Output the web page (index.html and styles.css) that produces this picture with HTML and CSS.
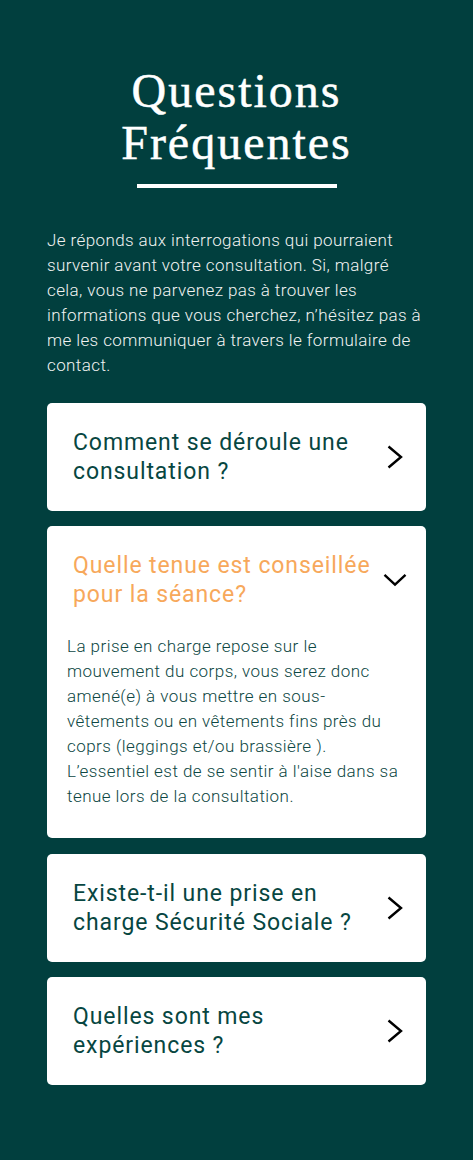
FILE: index.html
```html
<!DOCTYPE html>
<html lang="fr">
<head>
<meta charset="utf-8">
<title>Questions Fréquentes</title>
<link rel="stylesheet" href="styles.css">
</head>
<body>
<main class="page">
  <h1 class="title">Questions<br>Fréquentes</h1>
  <div class="title-bar"></div>
  <p class="intro">Je réponds aux interrogations qui pourraient survenir avant votre consultation. Si, malgré<br>cela, vous ne parvenez pas à trouver les informations que vous cherchez, n’hésitez pas à me les communiquer à travers le formulaire de contact.</p>

  <section class="faq">
    <div class="card">
      <div class="card-head">
        <h2 class="q">Comment se déroule une consultation ?</h2>
        <svg class="icon" viewBox="0 0 24 24"><path d="M5.5 1.5 L18 12 L5.5 22.5"/></svg>
      </div>
    </div>

    <div class="card open">
      <div class="card-head">
        <h2 class="q">Quelle tenue est conseillée pour la séance?</h2>
        <svg class="icon" viewBox="0 0 24 24"><path d="M1.5 6.8 L12 16.6 L22.5 6.8"/></svg>
      </div>
      <p class="answer">La prise en charge repose sur le mouvement du corps, vous serez donc amené(e) à vous mettre en sous-vêtements ou en vêtements fins près du coprs (leggings et/ou brassière ). L’essentiel est de se sentir à l'aise dans sa tenue lors de la consultation.</p>
    </div>

    <div class="card">
      <div class="card-head">
        <h2 class="q">Existe-t-il une prise en charge Sécurité Sociale ?</h2>
        <svg class="icon" viewBox="0 0 24 24"><path d="M5.5 1.5 L18 12 L5.5 22.5"/></svg>
      </div>
    </div>

    <div class="card">
      <div class="card-head">
        <h2 class="q">Quelles sont mes expériences ?</h2>
        <svg class="icon" viewBox="0 0 24 24"><path d="M5.5 1.5 L18 12 L5.5 22.5"/></svg>
      </div>
    </div>
  </section>
</main>
</body>
</html>
```

FILE: styles.css
```css
html, body {
  margin: 0;
  padding: 0;
  background: #013f3e;
}

body {
  font-family: Roboto, "Liberation Sans", sans-serif;
  min-height: 1160px;
}

.page {
  padding: 65px 47px 40px;
}

.title {
  margin: 0;
  font-family: "Liberation Serif", "Times New Roman", serif;
  font-weight: normal;
  font-size: 48px;
  line-height: 52px;
  letter-spacing: 2px;
  color: #ffffff;
  text-align: center;
  -webkit-text-stroke: 0.5px #ffffff;
}

.title-bar {
  width: 200px;
  height: 4px;
  background: #ffffff;
  margin: 15px auto 0;
}

.intro {
  margin: 40px 0 0;
  font-size: 17px;
  font-weight: 300;
  line-height: 25px;
  letter-spacing: 0.4px;
  color: #f1f3f2;
}

.faq {
  margin-top: 25px;
  display: flex;
  flex-direction: column;
  gap: 15.3px;
}

.card {
  background: #ffffff;
  border-radius: 5px;
  padding: 25px 20px 25px 26px;
}

.card.open {
  padding-bottom: 29px;
}

.card-head {
  display: flex;
  align-items: center;
  gap: 8px;
}

.q {
  flex: 1;
  margin: 0;
  font-size: 23px;
  font-weight: 400;
  line-height: 29px;
  letter-spacing: 0.9px;
  color: #074641;
}

.open .q {
  color: #f7a85b;
}

.icon {
  width: 24px;
  height: 24px;
  flex: none;
  margin-right: -0.5px;
}

.icon path {
  fill: none;
  stroke: #000000;
  stroke-width: 2.4;
}

.answer {
  margin: 25px 6px 0 -6px;
  font-size: 17px;
  font-weight: 300;
  line-height: 25px;
  letter-spacing: 0.45px;
  color: #0d4743;
}
```
